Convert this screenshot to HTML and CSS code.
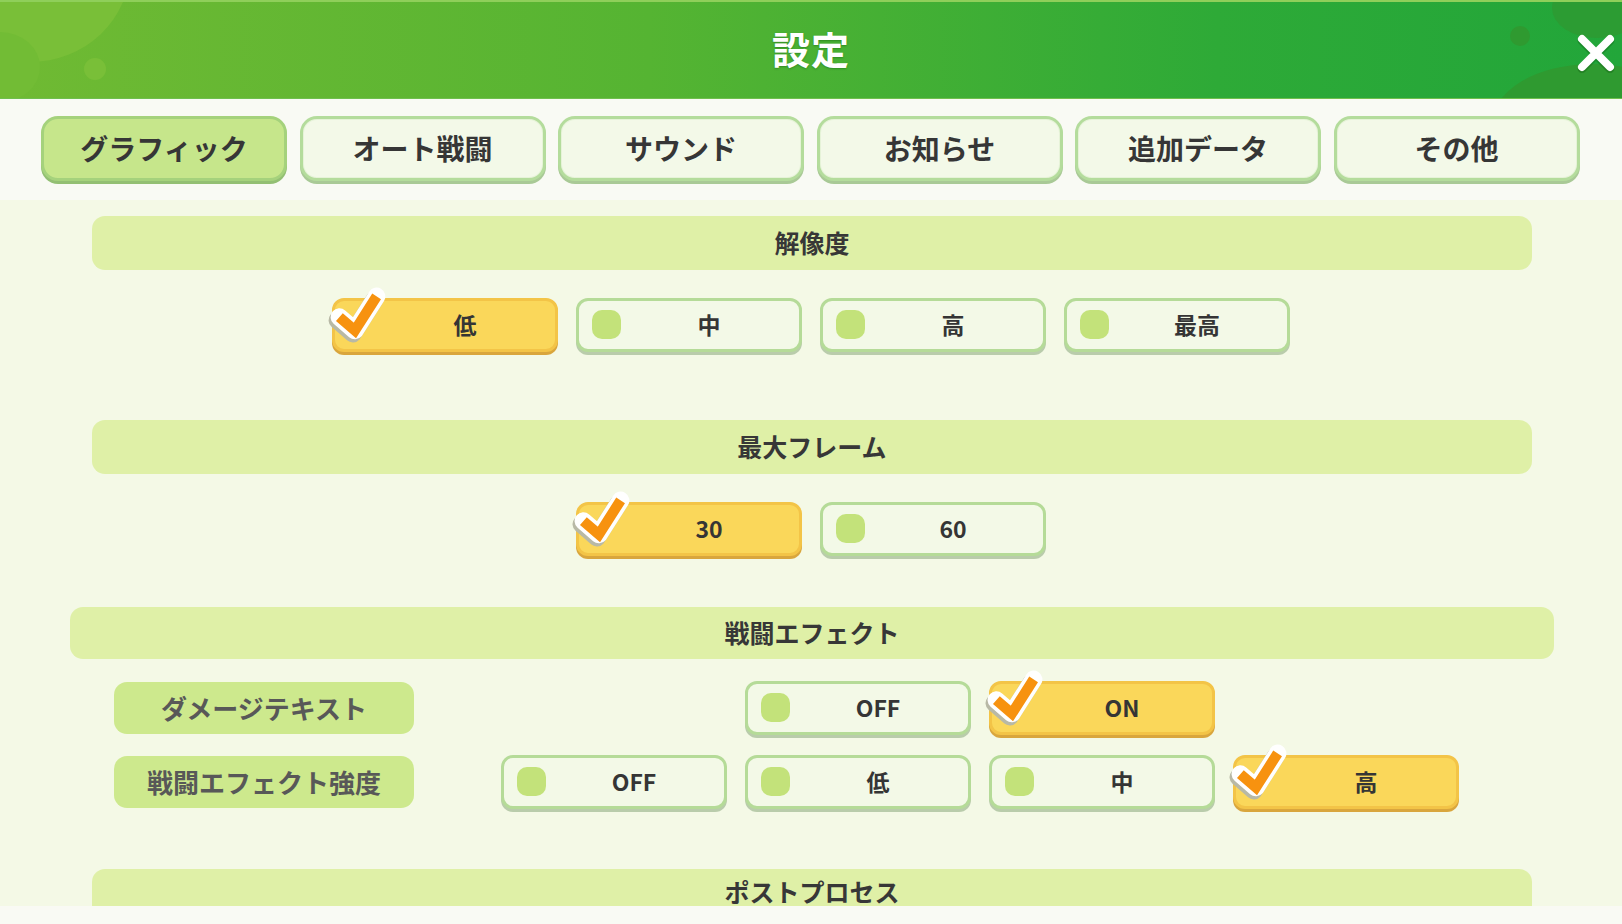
FILE: index.html
```html
<!DOCTYPE html>
<html lang="ja">
<head>
<meta charset="utf-8">
<title>設定</title>
<link rel="stylesheet" href="styles.css">
</head>
<body>
<div class="app">
  <header class="header">
    <span class="blob blob-l1"></span>
    <span class="blob blob-l2"></span>
    <span class="blob blob-l3"></span>
    <span class="blob blob-r1"></span>
    <span class="blob blob-r2"></span>
    <span class="blob blob-r3"></span>
    <h1 class="title">設定</h1>
    <button class="close" aria-label="閉じる">
      <svg width="44" height="44" viewBox="0 0 44 44">
        <path d="M8 8 L36 36 M36 8 L8 36" stroke="rgba(0,60,0,0.25)" stroke-width="9" stroke-linecap="round" transform="translate(0,1.5)"/>
        <path d="M8 8 L36 36 M36 8 L8 36" stroke="#ffffff" stroke-width="8" stroke-linecap="round"/>
      </svg>
    </button>
  </header>

  <nav class="tabs">
    <div class="tab active">グラフィック</div>
    <div class="tab">オート戦闘</div>
    <div class="tab">サウンド</div>
    <div class="tab">お知らせ</div>
    <div class="tab">追加データ</div>
    <div class="tab">その他</div>
  </nav>

  <main class="content">
    <div class="sec-head">解像度</div>
    <div class="opts">
      <div class="opt sel">低<svg class="check" viewBox="0 0 58 58"><path d="M11 33 L26 46 L47 13" class="ck-sh"/><path d="M11 31 L26 44 L47 11" class="ck-w"/><path d="M11 31 L26 44 L47 11" class="ck-o"/></svg></div>
      <div class="opt"><span class="dot"></span>中</div>
      <div class="opt"><span class="dot"></span>高</div>
      <div class="opt"><span class="dot"></span>最高</div>
    </div>

    <div class="sec-head sec2">最大フレーム</div>
    <div class="opts">
      <div class="opt sel">30<svg class="check" viewBox="0 0 58 58"><path d="M11 33 L26 46 L47 13" class="ck-sh"/><path d="M11 31 L26 44 L47 11" class="ck-w"/><path d="M11 31 L26 44 L47 11" class="ck-o"/></svg></div>
      <div class="opt"><span class="dot"></span>60</div>
    </div>

    <div class="sec-head wide sec3">戦闘エフェクト</div>
    <div class="row">
      <div class="label">ダメージテキスト</div>
      <div class="grid">
        <div class="opt c2"><span class="dot"></span>OFF</div>
        <div class="opt sel c3">ON<svg class="check" viewBox="0 0 58 58"><path d="M11 33 L26 46 L47 13" class="ck-sh"/><path d="M11 31 L26 44 L47 11" class="ck-w"/><path d="M11 31 L26 44 L47 11" class="ck-o"/></svg></div>
      </div>
    </div>
    <div class="row row2">
      <div class="label">戦闘エフェクト強度</div>
      <div class="grid">
        <div class="opt"><span class="dot"></span>OFF</div>
        <div class="opt"><span class="dot"></span>低</div>
        <div class="opt"><span class="dot"></span>中</div>
        <div class="opt sel">高<svg class="check" viewBox="0 0 58 58"><path d="M11 33 L26 46 L47 13" class="ck-sh"/><path d="M11 31 L26 44 L47 11" class="ck-w"/><path d="M11 31 L26 44 L47 11" class="ck-o"/></svg></div>
      </div>
    </div>

    <div class="sec-head sec4">ポストプロセス</div>
  </main>
  <footer class="foot"></footer>
</div>
</body>
</html>
```

FILE: styles.css
```css
* { box-sizing: border-box; }
html, body { margin: 0; padding: 0; }
body {
  width: 1622px;
  height: 924px;
  overflow: hidden;
  background: #f9faf4;
  font-family: "Noto Sans CJK JP", "Noto Sans", sans-serif;
  font-weight: 700;
  color: #383838;
}
.app { display: flex; flex-direction: column; width: 1622px; height: 924px; }

/* header */
.header {
  position: relative;
  height: 99px;
  flex: none;
  background: linear-gradient(90deg, #70ba33 0%, #55b432 40%, #2eaa37 75%, #22a63a 100%);
  border-top: 2px solid #8fcf5a;
  border-bottom: 1px solid #6fbf4d;
  display: flex;
  align-items: center;
  justify-content: center;
  overflow: hidden;
}
.blob { position: absolute; border-radius: 50%; }
.blob-l1 { left: -70px; top: -130px; width: 200px; height: 190px; background: #79bf38; }
.blob-l2 { left: -40px; top: 30px; width: 80px; height: 70px; background: #72bc35; }
.blob-l3 { left: 84px; top: 56px; width: 22px; height: 22px; background: #79bf38; }
.blob-r1 { right: -70px; top: 62px; width: 200px; height: 120px; background: #2f9a30; }
.blob-r2 { right: 92px; top: 24px; width: 20px; height: 20px; background: #2f9a30; }
.blob-r3 { right: -20px; top: -24px; width: 90px; height: 60px; background: #2c9c33; }
.title {
  position: relative;
  margin: 0 0 6px 0;
  font-size: 38px;
  font-weight: 700;
  color: #ffffff;
  letter-spacing: 1px;
  text-shadow: 0 1px 2px rgba(0, 70, 0, 0.35);
}
.close {
  position: absolute;
  right: 3px;
  top: 28px;
  width: 46px;
  height: 46px;
  padding: 0;
  border: 0;
  background: transparent;
  display: flex;
  align-items: center;
  justify-content: center;
}

/* tabs */
.tabs {
  flex: none;
  height: 101px;
  background: #f9faf4;
  display: flex;
  gap: 12.5px;
  padding: 17px 0 0 41px;
}
.tab {
  width: 246px;
  height: 65px;
  border: 3px solid #b4dc9c;
  border-radius: 17px;
  background: #f3f9e8;
  box-shadow: 0 3px 0 #a9c996, inset 0 0 0 1px #e6f3d8;
  display: flex;
  align-items: center;
  justify-content: center;
  padding-bottom: 2px;
  font-size: 28px;
  color: #363636;
}
.tab.active {
  background: #c6e68b;
  border-color: #a5d27c;
  box-shadow: 0 3px 0 #93bf73;
}

/* content */
.content {
  flex: none;
  height: 706px;
  overflow: hidden;
  background: #f4f9e6;
  padding-top: 16px;
  display: flex;
  flex-direction: column;
}
.sec-head {
  flex: none;
  height: 54px;
  margin-left: 92px;
  margin-right: 90px;
  background: #dff0a7;
  border-radius: 13px;
  display: flex;
  align-items: center;
  justify-content: center;
  padding-bottom: 2px;
  font-size: 25px;
  color: #373737;
}
.sec-head.wide { margin-left: 70px; margin-right: 68px; height: 52px; }
.sec2 { margin-top: 68px; }
.sec3 { margin-top: 51px; }
.sec4 { margin-top: 60px; padding-bottom: 10px; }

.opts {
  flex: none;
  margin-top: 28px;
  display: flex;
  justify-content: center;
  gap: 18px;
}
.opt {
  position: relative;
  width: 226px;
  height: 54px;
  border: 3px solid #b5db98;
  border-radius: 12px;
  background: #f3f9e7;
  box-shadow: 0 3px 0 #b9ccab;
  display: flex;
  align-items: center;
  justify-content: center;
  padding: 0 0 3px 40px;
  font-size: 23px;
  color: #353535;
}
.dot {
  position: absolute;
  left: 13px;
  top: 50%;
  width: 29px;
  height: 29px;
  margin-top: -15px;
  border-radius: 10px;
  background: #c3e27a;
}
.opt.sel {
  background: #fad75a;
  border-color: #f3c447;
  box-shadow: 0 3px 0 #d9a63d;
}
.check {
  position: absolute;
  left: -7px;
  top: -16px;
  width: 60px;
  height: 60px;
  overflow: visible;
}
.ck-sh { fill: none; stroke: #b8b9a6; stroke-width: 17; stroke-linejoin: round; stroke-linecap: round; transform: translate(-2px, 1px); }
.ck-w { fill: none; stroke: #ffffff; stroke-width: 17; stroke-linejoin: round; stroke-linecap: round; }
.ck-o { fill: none; stroke: #f7920f; stroke-width: 10; stroke-linejoin: miter; stroke-linecap: butt; }

/* effect rows */
.row {
  flex: none;
  display: flex;
  align-items: center;
  margin-top: 22px;
  padding-left: 114px;
}
.row2 { margin-top: 20px; }
.label {
  width: 300px;
  height: 52px;
  border-radius: 13px;
  background: #cde98d;
  display: flex;
  align-items: center;
  justify-content: center;
  padding-bottom: 2px;
  font-size: 26px;
  color: #585858;
}
.grid {
  margin-left: 87px;
  display: grid;
  grid-template-columns: repeat(4, 226px);
  column-gap: 18px;
}
.c2 { grid-column-start: 2; }
.c3 { grid-column-start: 3; }

.foot { flex: 1; background: #f9faf4; }
```
